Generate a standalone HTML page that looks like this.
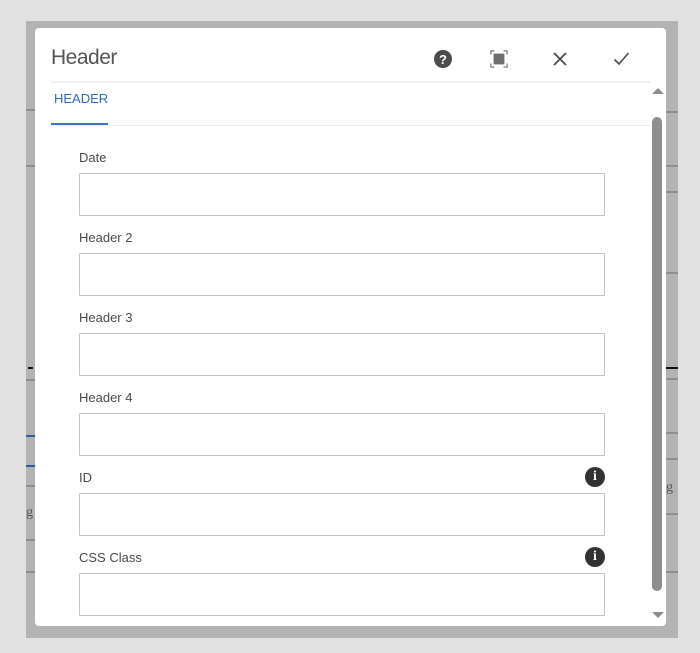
<!DOCTYPE html>
<html><head><style>
*{margin:0;padding:0;box-sizing:border-box}
body{width:700px;height:653px;background:#e1e1e1;position:relative;overflow:hidden;font-family:"Liberation Sans",sans-serif}
.ov{position:absolute;left:26px;top:21px;width:652px;height:617px;background:#b3b3b3}
.ln{position:absolute;height:2px;background:#8f8f8f}
.dlg{position:absolute;left:35px;top:28px;width:631px;height:598px;background:#fff;border-radius:4px}
.title{position:absolute;left:16px;top:18px;font-size:21px;color:#555;letter-spacing:-0.5px}
.lbl{position:absolute;left:44px;font-size:13px;color:#4b4b4b}
.box{position:absolute;left:44px;width:526px;height:43px;border:1px solid #c3c3c3;border-radius:1px}
.info{position:absolute;left:550px;width:20px;height:20px;border-radius:50%;background:#323232;color:#fff;font:bold 14px "Liberation Serif",serif;text-align:center;line-height:20px}
</style></head><body>
<div class="ov"></div>
<div class="ln" style="left:26px;top:109px;width:9px"></div>
<div class="ln" style="left:26px;top:165px;width:9px"></div>
<div class="ln" style="left:26px;top:379px;width:9px"></div>
<div class="ln" style="left:26px;top:435px;width:9px;background:#2d5f96"></div>
<div class="ln" style="left:26px;top:465px;width:9px;background:#2d5f96"></div>
<div class="ln" style="left:26px;top:485px;width:9px"></div>
<div class="ln" style="left:26px;top:539px;width:9px"></div>
<div class="ln" style="left:26px;top:571px;width:9px"></div>
<div style="position:absolute;left:28px;top:367px;width:5px;height:2px;background:#111"></div>
<div style="position:absolute;left:26px;top:505px;font:14px 'Liberation Serif',serif;color:#555">g</div>
<div class="ln" style="left:666px;top:111px;width:12px"></div>
<div class="ln" style="left:666px;top:165px;width:12px"></div>
<div class="ln" style="left:666px;top:191px;width:12px"></div>
<div class="ln" style="left:666px;top:272px;width:12px"></div>
<div style="position:absolute;left:666px;top:367px;width:12px;height:2px;border-top:2px dashed #111"></div>
<div class="ln" style="left:666px;top:378px;width:12px"></div>
<div class="ln" style="left:666px;top:432px;width:12px"></div>
<div class="ln" style="left:666px;top:458px;width:12px"></div>
<div class="ln" style="left:666px;top:513px;width:12px"></div>
<div class="ln" style="left:666px;top:571px;width:12px"></div>
<div style="position:absolute;left:666px;top:480px;font:14px 'Liberation Serif',serif;color:#555">g</div>
<div class="dlg">
 <div class="title">Header</div>
 <svg style="position:absolute;left:398px;top:21px" width="20" height="20" viewBox="0 0 20 20"><circle cx="10" cy="10" r="9" fill="#4b4b4b"/><text x="10" y="15" text-anchor="middle" font-family="Liberation Sans" font-weight="bold" font-size="13" fill="#fff">?</text></svg>
 <svg style="position:absolute;left:455px;top:22px" width="18" height="18" viewBox="0 0 20 20" fill="none" stroke="#6e6e6e" stroke-width="1.3"><path d="M1 5V1h4M15 1h4v4M19 15v4h-4M5 19H1v-4"/><rect x="4" y="4" width="12" height="12" fill="#6e6e6e" stroke="none"/></svg>
 <svg style="position:absolute;left:517px;top:23px" width="16" height="16" viewBox="0 0 16 16" stroke="#4b4b4b" stroke-width="1.8"><path d="M2 2L14 14M14 2L2 14"/></svg>
 <svg style="position:absolute;left:578px;top:23px" width="17" height="16" viewBox="0 0 17 16" fill="none" stroke="#4b4b4b" stroke-width="1.6"><path d="M1.5 8.5L6 13L15.5 2"/></svg>
 <div style="position:absolute;left:16px;top:53px;width:599px;height:2px;background:#f0f0f0"></div>
 <div style="position:absolute;left:19px;top:63px;font-size:13px;color:#2b6cc4">HEADER</div>
 <div style="position:absolute;left:16px;top:95px;width:57px;height:3px;background:#3a74c2"></div>
 <div style="position:absolute;left:16px;top:97px;width:599px;height:1px;background:#eee"></div>
 <div style="position:absolute;left:617px;top:60px;width:0;height:0;border-left:6px solid transparent;border-right:6px solid transparent;border-bottom:6px solid #8e8e8e"></div>
 <div style="position:absolute;left:617px;top:584px;width:0;height:0;border-left:6px solid transparent;border-right:6px solid transparent;border-top:6px solid #8e8e8e"></div>
 <div style="position:absolute;left:617px;top:89px;width:10px;height:474px;border-radius:5px;background:#8e8e8e"></div>
 <div class="lbl" style="top:122px">Date</div><div class="box" style="top:145px"></div>
 <div class="lbl" style="top:202px">Header 2</div><div class="box" style="top:225px"></div>
 <div class="lbl" style="top:282px">Header 3</div><div class="box" style="top:305px"></div>
 <div class="lbl" style="top:362px">Header 4</div><div class="box" style="top:385px"></div>
 <div class="lbl" style="top:442px">ID</div><div class="info" style="top:439px">i</div><div class="box" style="top:465px"></div>
 <div class="lbl" style="top:522px">CSS Class</div><div class="info" style="top:519px">i</div><div class="box" style="top:545px"></div>
</div>
</body></html>
